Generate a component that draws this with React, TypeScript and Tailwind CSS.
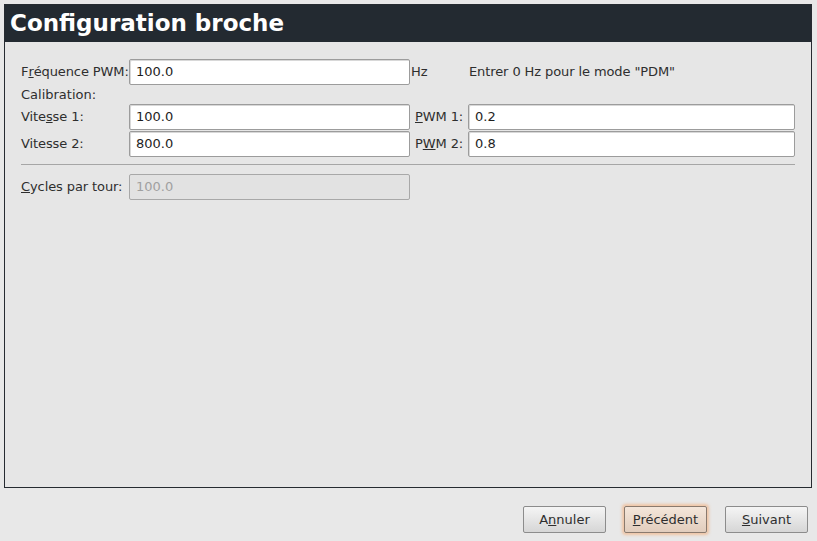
import type { ReactNode } from 'react';

const FONT = "font-['DejaVu_Sans','Liberation_Sans',sans-serif]";

function Field({ value, disabled }: { value: string; disabled?: boolean }) {
  return (
    <div
      className={
        'flex h-[26px] items-center rounded-[2px] border px-[6px] text-[13px] ' +
        (disabled
          ? 'border-[#a8a8a8] bg-[#e2e2e2] text-[#a0a0a0]'
          : 'border-[#9c9c9c] bg-white text-[#1e1e1e] shadow-[inset_1px_1px_0_#d8d8d8]')
      }
    >
      {value}
    </div>
  );
}

function Label({ children, pad = '' }: { children: ReactNode; pad?: string }) {
  return <div className={'flex items-center whitespace-nowrap text-[13px] tracking-[-0.1px] text-[#2e2e2e] ' + pad}>{children}</div>;
}

function Button({ children, focused }: { children: ReactNode; focused?: boolean }) {
  return (
    <button
      className={
        'h-[27px] w-[83px] rounded-[2px] border text-[13px] text-[#2e2e2e] ' +
        (focused
          ? 'border-[#8a7a6e] bg-gradient-to-b from-[#f4e6da] to-[#e2cdbd] shadow-[0_0_3px_2px_rgba(245,165,105,0.55)]'
          : 'border-[#8c8c8c] bg-gradient-to-b from-[#f5f5f5] to-[#d6d6d6]')
      }
    >
      {children}
    </button>
  );
}

export default function App() {
  return (
    <div className={'flex h-[541px] w-[817px] flex-col bg-[#e8e8e8] pl-[4px] pr-[5px] pt-[4px] ' + FONT}>
      <div className="flex h-[484px] flex-col border border-[#262b31] bg-[#e6e6e6]">
        <div className="flex h-[37px] items-center bg-[#232a31] px-[5px] text-[23px] font-bold text-white">
          Configuration broche
        </div>

        <div className="flex flex-col px-[16px] pt-[17px]">
          <div className="grid grid-cols-[108px_281px_58px_1fr] gap-y-[1px]">
            <Label>
              F<u>r</u>équence PWM:
            </Label>
            <Field value="100.0" />
            <Label pad="pl-[1px]">Hz</Label>
            <Label pad="pl-[1px]">Entrer 0 Hz pour le mode "PDM"</Label>

            <div className="col-span-4 flex h-[17px] items-center text-[13px] text-[#2e2e2e]">Calibration:</div>

            <Label>
              Vite<u>s</u>se 1:
            </Label>
            <Field value="100.0" />
            <Label pad="pl-[5px]">
              <u>P</u>WM 1:
            </Label>
            <Field value="0.2" />

            <Label>Vitesse 2:</Label>
            <Field value="800.0" />
            <Label pad="pl-[5px]">
              P<u>W</u>M 2:
            </Label>
            <Field value="0.8" />
          </div>

          <div className="mt-[7px] h-[1px] bg-[#a6a6a6]" />

          <div className="mt-[9px] grid grid-cols-[108px_281px]">
            <Label>
              <u>C</u>ycles par tour:
            </Label>
            <Field value="100.0" disabled />
          </div>
        </div>
      </div>

      <div className="flex justify-end gap-[18px] pr-[4px] pt-[18px]">
        <Button>
          A<u>n</u>nuler
        </Button>
        <Button focused>
          <u>P</u>récédent
        </Button>
        <Button>
          <u>S</u>uivant
        </Button>
      </div>
    </div>
  );
}
